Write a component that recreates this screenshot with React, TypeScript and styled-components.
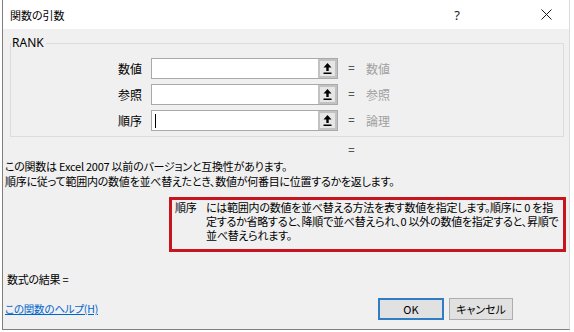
import React from "react";
import styled, { createGlobalStyle } from "styled-components";

const Global = createGlobalStyle`
  html, body { margin: 0; padding: 0; background: #ffffff; overflow: hidden; }
  body {
    font-family: "Noto Sans CJK JP", "Noto Sans", sans-serif;
    font-size: 12px;
    color: #000000;
    font-feature-settings: "palt";
  }
`;

const Frame = styled.div`
  box-sizing: border-box;
  margin-left: 2px;
  width: 568px;
  height: 330px;
  border-left: 1px solid #7f7f7f;
  border-right: 1px solid #dadada;
  border-bottom: 1px solid #7f7f7f;
  display: flex;
  flex-direction: column;
  background: #f0f0f0;
`;

const TitleBar = styled.div`
  height: 29px;
  background: #ffffff;
  display: flex;
  align-items: center;
  padding-left: 7px;
`;

const Title = styled.div`
  flex: 1;
  font-size: 11px;
  line-height: 14px;
`;

const TitleButton = styled.div<{ $gap?: number }>`
  width: 46px;
  height: 29px;
  display: flex;
  align-items: center;
  justify-content: center;
  margin-right: ${(p) => p.$gap ?? 0}px;
  font-family: "Noto Sans", sans-serif;
  font-size: 13px;
  color: #1a1a1a;
`;

const Body = styled.div`
  flex: 1;
  display: flex;
  flex-direction: column;
`;

const Group = styled.fieldset`
  margin: 7px 5px 0 7px;
  padding: 8px 0 5px 0;
  border: 1px solid #dcdcdc;
  min-width: 0;
`;

const Legend = styled.legend`
  padding: 0 2px 0 1px;
  margin-left: 0;
  font-family: "Noto Sans", sans-serif;
  font-size: 12px;
  line-height: 14px;
  color: #000;
`;

const Rows = styled.div`
  display: flex;
  flex-direction: column;
  gap: 5px;
`;

const Row = styled.div`
  display: flex;
  align-items: center;
  height: 21px;
`;

const Label = styled.div`
  width: 131px;
  margin-right: 9px;
  text-align: right;
  line-height: 14px;
`;

const InputGroup = styled.div`
  display: flex;
  height: 21px;
  width: 187px;
  box-sizing: border-box;
  border: 1px solid #a9a9a9;
  background: #ffffff;
`;

const Field = styled.div`
  flex: 1;
  display: flex;
  align-items: center;
  padding-left: 3px;
`;

const Caret = styled.span`
  width: 1px;
  height: 14px;
  background: #000;
`;

const RefButton = styled.div`
  width: 19px;
  box-sizing: border-box;
  border: 2px solid #c2c2c2;
  background: #e6e6e6;
  display: flex;
  align-items: center;
  justify-content: center;
`;

const Eq = styled.div`
  margin-left: 10px;
  width: 8px;
  font-family: "Noto Sans", sans-serif;
  font-size: 12px;
  color: #555;
  line-height: 14px;
`;

const Value = styled.div`
  margin-left: 10px;
  color: #a0a0a0;
  line-height: 14px;
`;

const ResultEq = styled.div`
  margin: 7px 0 0 345px;
  font-family: "Noto Sans", sans-serif;
  color: #555;
  line-height: 14px;
`;

const Small = styled.div`
  font-size: 11px;
  letter-spacing: -0.25px;
`;

const Description = styled(Small)`
  margin-top: 1px;
  padding-left: 2px;
  line-height: 15px;
  white-space: nowrap;
`;

const Annotated = styled(Small)`
  margin: 8px 0 0 166px;
  width: 397px;
  height: 55px;
  box-sizing: border-box;
  border: 3px solid #c8141e;
  display: flex;
  padding: 0 0 0 3px;
  overflow: hidden;
`;

const Term = styled.div`
  width: 31px;
  flex: none;
  line-height: 14px;
`;

const Help = styled.div`
  line-height: 14px;
  white-space: nowrap;
`;

const ResultLine = styled(Small)`
  margin: 20px 0 0 4px;
  line-height: 14px;
`;

const Footer = styled.div`
  margin-top: 12px;
  display: flex;
  align-items: center;
  height: 22px;
  padding: 0 56px 0 2px;
`;

const HelpLink = styled.a`
  flex: 1;
  color: #0066cc;
  text-decoration: underline;
  font-size: 10.5px;
  letter-spacing: -0.2px;
  line-height: 14px;
`;

const Button = styled.div<{ $primary?: boolean; $w: number }>`
  width: ${(p) => p.$w}px;
  height: 22px;
  box-sizing: border-box;
  margin-left: 5px;
  background: #e1e1e1;
  border: ${(p) => (p.$primary ? "2px solid #2f7ec4" : "1px solid #adadad")};
  display: flex;
  align-items: center;
  justify-content: center;
  font-size: 11px;
`;

const RefIcon = () => (
  <svg width="9" height="11" viewBox="0 0 9 11">
    <path d="M4.5 0 L8.5 4.5 L5.7 4.5 L5.7 8 L3.3 8 L3.3 4.5 L0.5 4.5 Z" fill="#000" />
    <rect x="0.5" y="9.5" width="8" height="1.5" fill="#000" />
  </svg>
);

const CloseIcon = () => (
  <svg width="11" height="11" viewBox="0 0 11 11">
    <path d="M0.5 0.5 L10.5 10.5 M10.5 0.5 L0.5 10.5" stroke="#1a1a1a" strokeWidth="1" />
  </svg>
);

const rows = [
  { label: "数値", value: "数値", caret: false },
  { label: "参照", value: "参照", caret: false },
  { label: "順序", value: "論理", caret: true },
];

export default function App() {
  return (
    <>
      <Global />
      <Frame>
        <TitleBar>
          <Title>関数の引数</Title>
          <TitleButton $gap={43}>?</TitleButton>
          <TitleButton>
            <CloseIcon />
          </TitleButton>
        </TitleBar>
        <Body>
          <Group>
            <Legend>RANK</Legend>
            <Rows>
              {rows.map((r) => (
                <Row key={r.label}>
                  <Label>{r.label}</Label>
                  <InputGroup>
                    <Field>{r.caret && <Caret />}</Field>
                    <RefButton>
                      <RefIcon />
                    </RefButton>
                  </InputGroup>
                  <Eq>=</Eq>
                  <Value>{r.value}</Value>
                </Row>
              ))}
            </Rows>
          </Group>
          <ResultEq>=</ResultEq>
          <Description>
            <div>この関数は Excel 2007 以前のバージョンと互換性があります。</div>
            <div>順序に従って範囲内の数値を並べ替えたとき、数値が何番目に位置するかを返します。</div>
          </Description>
          <Annotated>
            <Term>順序</Term>
            <Help>
              <div>には範囲内の数値を並べ替える方法を表す数値を指定します。順序に 0 を指</div>
              <div>定するか省略すると、降順で並べ替えられ、0 以外の数値を指定すると、昇順で</div>
              <div>並べ替えられます。</div>
            </Help>
          </Annotated>
          <ResultLine>数式の結果 =</ResultLine>
          <Footer>
            <HelpLink>この関数のヘルプ(H)</HelpLink>
            <Button $primary $w={66}>OK</Button>
            <Button $w={64}>キャンセル</Button>
          </Footer>
        </Body>
      </Frame>
    </>
  );
}
